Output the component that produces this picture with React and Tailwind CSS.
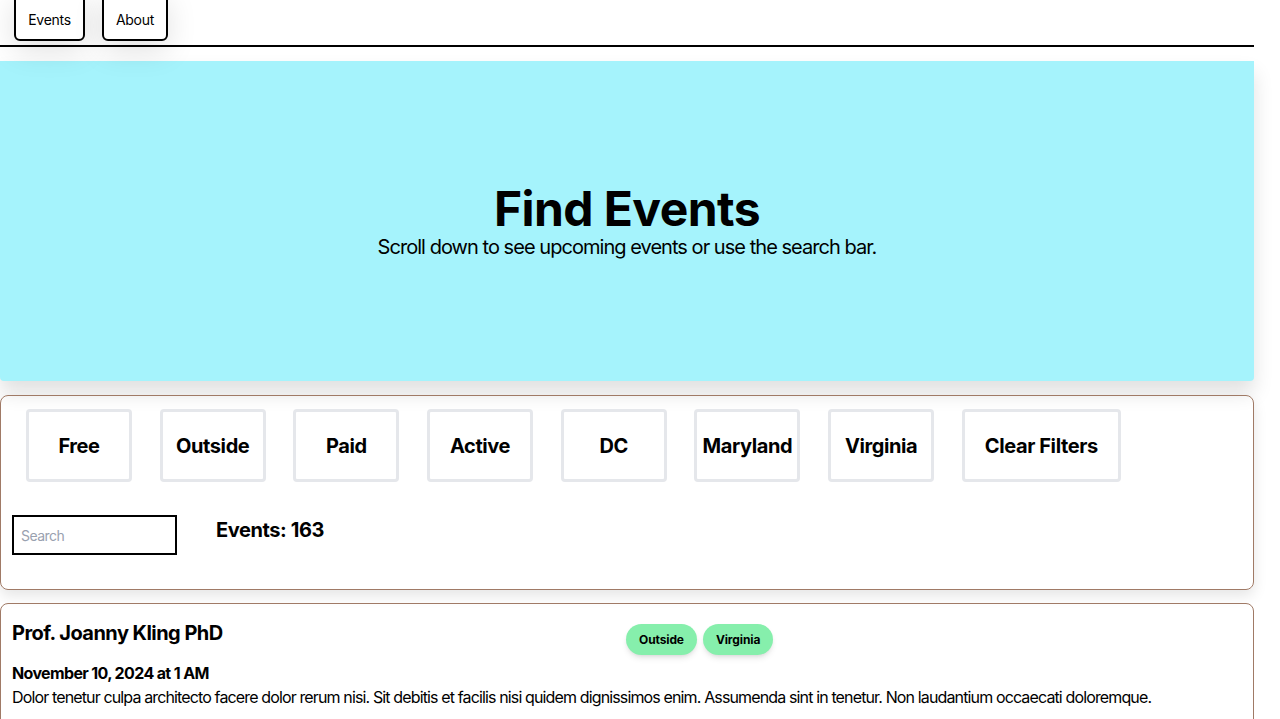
const filters = ["Free", "Outside", "Paid", "Active", "DC", "Maryland", "Virginia"];

export default function App() {
  return (
    <div className="min-h-screen bg-white text-black" style={{ fontFamily: "Inter, 'Liberation Sans', sans-serif" }}>
      <div className="w-[1254px]">
        {/* nav */}
        <nav className="flex h-[47px] items-end gap-[17px] border-b-2 border-black pb-[4px] pl-[14px]">
          <button className="flex h-[50px] w-[71px] items-center justify-center rounded-md border-2 border-black bg-white pt-[7px] text-sm tracking-[-0.02em] shadow-[0_10px_30px_rgba(0,0,0,0.12)]">
            Events
          </button>
          <button className="flex h-[50px] w-[66px] items-center justify-center rounded-md border-2 border-black bg-white pt-[7px] text-sm tracking-[-0.02em] shadow-[0_10px_30px_rgba(0,0,0,0.12)]">
            About
          </button>
        </nav>

        {/* hero */}
        <section className="mt-[14px] flex h-[320px] flex-col items-center justify-center rounded-b-[4px] bg-[#a5f3fc] shadow-[0_12px_20px_rgba(0,0,0,0.12)]">
          <h1 className="text-[48px] leading-[52px] font-bold tracking-[-0.012em]">Find Events</h1>
          <p className="text-[20px] leading-[24px] tracking-[-0.048em]">Scroll down to see upcoming events or use the search bar.</p>
        </section>

        {/* filters */}
        <section className="mt-[14px] h-[195px] rounded-lg border border-[#a07a66] shadow-[0_6px_14px_rgba(0,0,0,0.1)]">
          <div className="flex gap-[27.7px] pt-[13px] pl-[25px]">
            {filters.map((f) => (
              <button
                key={f}
                className="flex h-[73px] w-[106px] items-center justify-center rounded border-[3px] border-gray-200 text-[20px] font-bold tracking-[-0.02em]"
              >
                {f}
              </button>
            ))}
            <button className="flex h-[73px] w-[159px] items-center justify-center rounded border-[3px] border-gray-200 text-[20px] font-bold tracking-[-0.02em]">
              Clear Filters
            </button>
          </div>
          <div className="mt-[33px] flex items-start pl-[11px]">
            <input
              placeholder="Search"
              className="h-[40px] w-[165px] border-2 border-black px-[7px] text-sm tracking-[-0.04em] placeholder:text-gray-400"
            />
            <p className="ml-[39px] mt-[1px] text-[20px] leading-[28px] font-bold tracking-[-0.02em]">Events: 163</p>
          </div>
        </section>

        {/* event card */}
        <section className="mt-[13px] h-[130px] rounded-lg border border-[#a07a66] px-[11px] pt-[15px]">
          <div className="flex">
            <h2 className="w-[614px] text-[20px] leading-[28px] font-bold tracking-[-0.027em]">Prof. Joanny Kling PhD</h2>
            <div className="mt-[5px] flex gap-[6px]">
              <span className="flex h-[31px] items-center rounded-full bg-[#86efac] px-[13px] text-xs font-bold tracking-[-0.01em] shadow-md">Outside</span>
              <span className="flex h-[31px] items-center rounded-full bg-[#86efac] px-[13px] text-xs font-bold tracking-[-0.01em] shadow-md">Virginia</span>
            </div>
          </div>
          <p className="mt-[6px] text-base font-bold tracking-[-0.04em]">November 10, 2024 at 1 AM</p>
          <p className="text-base tracking-[-0.054em]">
            Dolor tenetur culpa architecto facere dolor rerum nisi. Sit debitis et facilis nisi quidem dignissimos enim. Assumenda sint in tenetur. Non laudantium occaecati doloremque.
          </p>
        </section>
      </div>
    </div>
  );
}
